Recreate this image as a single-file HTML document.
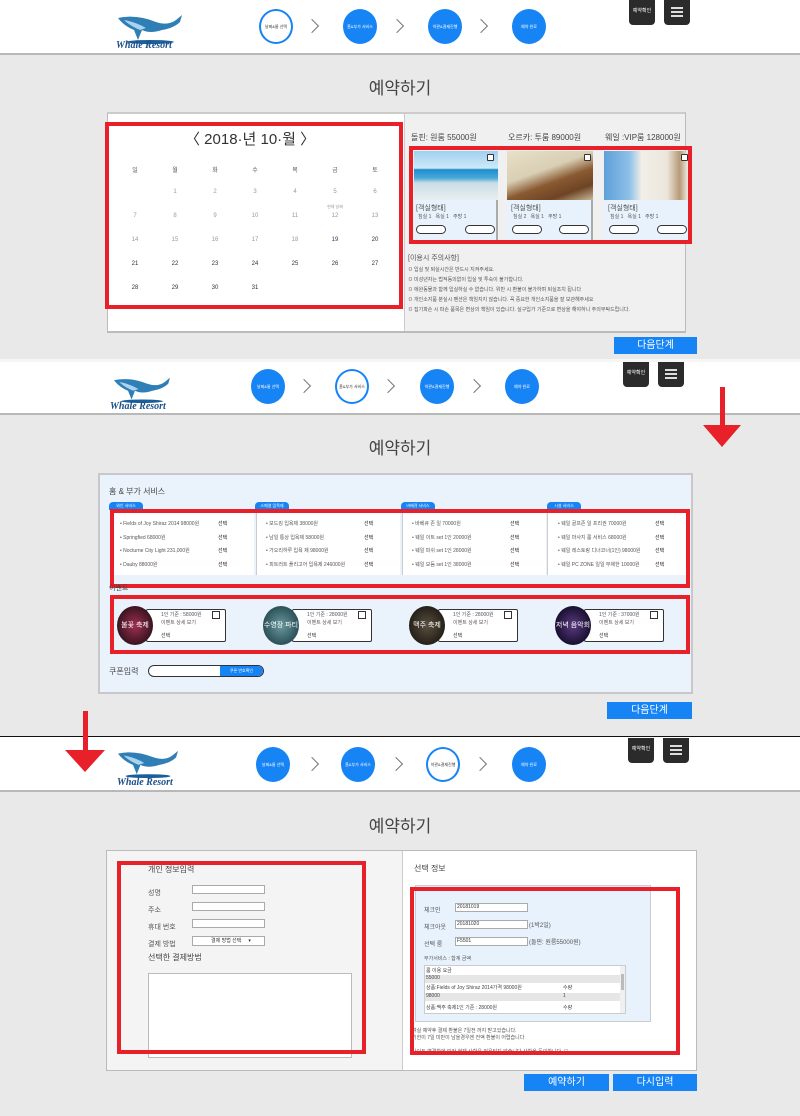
<!DOCTYPE html>
<html><head><meta charset="utf-8"><style>
*{margin:0;padding:0;box-sizing:border-box}
body{width:800px;height:1116px;position:relative;overflow:hidden;background:#e9e9e9;font-family:"Liberation Sans","Noto Sans CJK KR",sans-serif;color:#333}
div,span{position:absolute}
.hdr{left:0;width:800px;background:#fff;border-bottom:2px solid #b8b8b8}
.c{width:34px;height:35px;border-radius:50%;background:#1784f5;color:#fff;font-size:4px;display:flex;align-items:center;justify-content:center;text-align:center}
.c.w{background:#fff;border:2px solid #1784f5;color:#333}
.chev{width:10px;height:10px;border-right:1px solid #777;border-top:1px solid #777;transform:rotate(45deg)}
.db{width:26px;height:25px;background:#2b2b2b;border-radius:0 0 4px 4px;color:#fff;font-size:5px;text-align:center;line-height:22px}
.ham{width:26px;height:25px;background:#2b2b2b;border-radius:0 0 4px 4px}
.ham i{position:absolute;left:7px;width:12px;height:2px;background:#ddd}
.title{left:0;width:800px;text-align:center;font-size:17px;color:#444}
.red{border:4px solid #e8202a}
.btn{background:#1784f5;color:#fff;font-size:10px;text-align:center;line-height:18px}
.f7{font-size:7px}.f5{font-size:5px;color:#555}
.cal span{width:20px;text-align:center;font-size:6px;color:#999}
.arrow{width:0;height:0}
</style></head><body>

<!-- SECTION 1 header -->
<div class="hdr" style="top:0;height:55px"></div>
<svg style="position:absolute;left:116px;top:12px" width="68" height="32" viewBox="0 0 68 32"><path d="M2 6 Q20 2 40 10 Q52 14 60 8 L66 3 L64 10 Q58 16 46 18 Q34 22 26 18 L22 28 L18 18 Q8 14 2 6Z" fill="#2f7fb6"/><path d="M8 8 Q20 10 30 16 L24 18 Q14 14 8 8Z" fill="#a9d3ee"/><ellipse cx="34" cy="30" rx="24" ry="2" fill="#1a5f9a"/></svg>
<div style="left:116px;top:40px;font:italic bold 10px 'Liberation Serif',serif;color:#1b4f8a">Whale Resort</div>
<div class="c w" style="left:259px;top:9px">날짜&룸 선택</div>
<div class="chev" style="left:307px;top:21px"></div>
<div class="c" style="left:343px;top:9px">홈&부가 서비스</div>
<div class="chev" style="left:392px;top:21px"></div>
<div class="c" style="left:428px;top:9px">약관&결제진행</div>
<div class="chev" style="left:476px;top:21px"></div>
<div class="c" style="left:512px;top:9px">예약 완료</div>
<div class="db" style="left:629px;top:0">예약확인</div>
<div class="ham" style="left:664px;top:0"><i style="top:7px"></i><i style="top:11px"></i><i style="top:15px"></i></div>

<div class="title" style="top:74px">예약하기</div>
<div style="left:107px;top:112px;width:579px;height:221px;background:#fff;border:1px solid #bbb;border-top:2px solid #ccc;border-bottom:2px solid #bbb"></div>
<div style="left:404px;top:114px;width:281px;height:217px;background:#f0f0f0;border-left:1px solid #ccc"></div>
<div class="red" style="left:105px;top:122px;width:298px;height:187px"></div>
<div style="left:185px;top:128px;font-size:15px;color:#333">〈 2018·년 10·월 〉</div>
<div class="cal">
<span style="left:125px;top:165px;color:#555">일</span><span style="left:165px;top:165px;color:#555">월</span><span style="left:205px;top:165px;color:#555">화</span><span style="left:245px;top:165px;color:#555">수</span><span style="left:285px;top:165px;color:#555">목</span><span style="left:325px;top:165px;color:#555">금</span><span style="left:365px;top:165px;color:#555">토</span>
<span style="left:165px;top:189px">1</span><span style="left:205px;top:189px">2</span><span style="left:245px;top:189px">3</span><span style="left:285px;top:189px">4</span><span style="left:325px;top:189px">5</span><span style="left:365px;top:189px">6</span>
<span style="left:320px;top:204px;width:30px;font-size:4px">현재 날짜</span>
<span style="left:125px;top:213px">7</span><span style="left:165px;top:213px">8</span><span style="left:205px;top:213px">9</span><span style="left:245px;top:213px">10</span><span style="left:285px;top:213px">11</span><span style="left:325px;top:213px">12</span><span style="left:365px;top:213px">13</span>
<span style="left:125px;top:237px">14</span><span style="left:165px;top:237px">15</span><span style="left:205px;top:237px">16</span><span style="left:245px;top:237px">17</span><span style="left:285px;top:237px">18</span><span style="left:325px;top:237px;color:#246">19</span><span style="left:365px;top:237px;color:#333">20</span>
<span style="left:125px;top:261px;color:#333">21</span><span style="left:165px;top:261px;color:#333">22</span><span style="left:205px;top:261px;color:#333">23</span><span style="left:245px;top:261px;color:#333">24</span><span style="left:285px;top:261px;color:#333">25</span><span style="left:325px;top:261px;color:#333">26</span><span style="left:365px;top:261px;color:#333">27</span>
<span style="left:125px;top:285px;color:#333">28</span><span style="left:165px;top:285px;color:#333">29</span><span style="left:205px;top:285px;color:#333">30</span><span style="left:245px;top:285px;color:#333">31</span>
</div>
<div style="left:411px;top:132px;font-size:8px;color:#444;white-space:nowrap">돌핀: 원룸 55000원</div>
<div style="left:508px;top:132px;font-size:8px;color:#444;white-space:nowrap">오르카: 투룸 89000원</div>
<div style="left:605px;top:132px;font-size:8px;color:#444;white-space:nowrap">웨일 :VIP룸 128000원</div>

<div style="left:414px;top:151px;width:84px;height:90px;background:#e8f2fc;border-right:2px solid #aaa"></div>
<div style="left:414px;top:151px;width:84px;height:49px;background:linear-gradient(#9fd0f0 0,#cfe9f7 35%,#1e8ecf 38%,#48a9d8 55%,#c9dde6 65%,#e8eef0 100%)"></div>
<div style="left:507px;top:151px;width:86px;height:90px;background:#e8f2fc;border-right:2px solid #aaa"></div>
<div style="left:507px;top:151px;width:86px;height:49px;background:linear-gradient(160deg,#e8e0c8 0,#d8cfb4 40%,#8a5a32 60%,#6d4424 80%,#c8b89a 100%)"></div>
<div style="left:604px;top:151px;width:84px;height:90px;background:#e8f2fc"></div>
<div style="left:604px;top:151px;width:84px;height:49px;background:linear-gradient(90deg,#5f9fd8 0,#8cc0e8 30%,#f2efe8 45%,#ece6dc 75%,#b89a78 90%,#f0ece4 100%)"></div>
<div style="left:487px;top:154px;width:7px;height:7px;border:1px solid #333;background:#fff;border-radius:1px"></div>
<div style="left:584px;top:154px;width:7px;height:7px;border:1px solid #333;background:#fff;border-radius:1px"></div>
<div style="left:681px;top:154px;width:7px;height:7px;border:1px solid #333;background:#fff;border-radius:1px"></div>
<div class="f7" style="left:416px;top:203px;color:#555">[객실형태]</div><div class="f5" style="left:418px;top:213px">침실 1 &nbsp; 욕실 1 &nbsp; 주방 1</div>
<div class="f7" style="left:511px;top:203px;color:#555">[객실형태]</div><div class="f5" style="left:513px;top:213px">침실 2 &nbsp; 욕실 1 &nbsp; 주방 1</div>
<div class="f7" style="left:608px;top:203px;color:#555">[객실형태]</div><div class="f5" style="left:610px;top:213px">침실 1 &nbsp; 욕실 1 &nbsp; 주방 1</div>
<div style="left:416px;top:225px;width:30px;height:9px;border:1px solid #333;border-radius:5px;background:#fff"></div><div style="left:465px;top:225px;width:30px;height:9px;border:1px solid #333;border-radius:5px;background:#fff"></div>
<div style="left:512px;top:225px;width:30px;height:9px;border:1px solid #333;border-radius:5px;background:#fff"></div><div style="left:559px;top:225px;width:30px;height:9px;border:1px solid #333;border-radius:5px;background:#fff"></div>
<div style="left:609px;top:225px;width:30px;height:9px;border:1px solid #333;border-radius:5px;background:#fff"></div><div style="left:657px;top:225px;width:30px;height:9px;border:1px solid #333;border-radius:5px;background:#fff"></div>
<div class="red" style="left:409px;top:146px;width:283px;height:98px"></div>
<div style="left:408px;top:253px;font-size:7px;color:#555">[이용시 주의사항]</div>
<div class="f5" style="left:408px;top:265px;line-height:10px;white-space:nowrap">ㅁ 입실 및 퇴실시간은 반드시 지켜주세요.<br>ㅁ 미성년자는 법적동의없이 입실 및 투숙이 불가합니다.<br>ㅁ 애완동물과 함께 입실하실 수 없습니다. 위반 시 환불이 불가하며 퇴실조치 됩니다<br>ㅁ 개인소지품 분실시 펜션은 책임지지 않습니다. 꼭 중요한 개인소지품을 잘 보관해주세요<br>ㅁ 집기파손 시 파손 품목은 변상의 책임이 있습니다. 실구입가 기준으로 변상을 해야하니 주의부탁드립니다.</div>
<div class="btn" style="left:614px;top:337px;width:83px;height:17px">다음단계</div>

<!-- SECTION 2 -->
<div style="left:0;top:359px;width:800px;height:3px;background:#f6f6f6"></div>
<div class="hdr" style="top:362px;height:53px"></div>
<svg style="position:absolute;left:110px;top:375px" width="64" height="28" viewBox="0 0 68 32"><path d="M2 6 Q20 2 40 10 Q52 14 60 8 L66 3 L64 10 Q58 16 46 18 Q34 22 26 18 L22 28 L18 18 Q8 14 2 6Z" fill="#2f7fb6"/><path d="M8 8 Q20 10 30 16 L24 18 Q14 14 8 8Z" fill="#a9d3ee"/><ellipse cx="34" cy="30" rx="24" ry="2" fill="#1a5f9a"/></svg>
<div style="left:110px;top:401px;font:italic bold 10px 'Liberation Serif',serif;color:#1b4f8a">Whale Resort</div>
<div class="c" style="left:251px;top:369px">날짜&룸 선택</div>
<div class="chev" style="left:299px;top:381px"></div>
<div class="c w" style="left:335px;top:369px">홈&부가 서비스</div>
<div class="chev" style="left:383px;top:381px"></div>
<div class="c" style="left:420px;top:369px">약관&결제진행</div>
<div class="chev" style="left:469px;top:381px"></div>
<div class="c" style="left:505px;top:369px">예약 완료</div>
<div class="db" style="left:623px;top:362px">예약확인</div>
<div class="ham" style="left:658px;top:362px"><i style="top:7px"></i><i style="top:11px"></i><i style="top:15px"></i></div>
<div style="left:720px;top:387px;width:5px;height:40px;background:#e8202a"></div>
<div class="arrow" style="left:703px;top:425px;border-left:19px solid transparent;border-right:19px solid transparent;border-top:22px solid #e8202a"></div>
<div class="title" style="top:434px">예약하기</div>

<div style="left:98px;top:473px;width:595px;height:221px;background:#eaf3fc;border:2px solid #c8c8c8"></div>
<div style="left:109px;top:486px;font-size:8px;color:#444">홈 &amp; 부가 서비스</div>
<div style="left:109px;top:502px;width:34px;height:8px;background:#1784f5;border-radius:4px 4px 0 0;font-size:4px;color:#fff;text-align:center;line-height:8px">와인 서비스</div>
<div style="left:255px;top:502px;width:34px;height:8px;background:#1784f5;border-radius:4px 4px 0 0;font-size:4px;color:#fff;text-align:center;line-height:8px">스페셜 입욕제</div>
<div style="left:401px;top:502px;width:34px;height:8px;background:#1784f5;border-radius:4px 4px 0 0;font-size:4px;color:#fff;text-align:center;line-height:8px">바베큐 서비스</div>
<div style="left:547px;top:502px;width:34px;height:8px;background:#1784f5;border-radius:4px 4px 0 0;font-size:4px;color:#fff;text-align:center;line-height:8px">시설 서비스</div>
<div style="left:110px;top:511px;width:144px;height:64px;background:#fff"></div>
<div style="left:256px;top:511px;width:144px;height:64px;background:#fff;border-left:1px solid #ccc"></div>
<div style="left:402px;top:511px;width:144px;height:64px;background:#fff;border-left:1px solid #ccc"></div>
<div style="left:547px;top:511px;width:141px;height:64px;background:#fff;border-left:1px solid #ccc"></div>
<div class="f5" style="left:120px;top:518px;line-height:13.5px;white-space:nowrap">• Fields of Joy Shiraz 2014 98000원<br>• Springfied 68000원<br>• Nocturne City Light 231,000원<br>• Dauby 88000원</div>
<div class="f5" style="left:266px;top:518px;line-height:13.5px;white-space:nowrap">• 보드킹 입욕제 38000원<br>• 남일 통상 입욕제 58000원<br>• 가오리하루 입욕 제 98000원<br>• 피트러트 플리고어 입욕제 246000원</div>
<div class="f5" style="left:412px;top:518px;line-height:13.5px;white-space:nowrap">• 바베큐 존 일 70000원<br>• 웨일 이트 set 1인 20000원<br>• 웨일 피쉬 set 1인 28000원<br>• 웨일 모듬 set 1인 38000원</div>
<div class="f5" style="left:558px;top:518px;line-height:13.5px;white-space:nowrap">• 웨일 골프존 일 프리권 70000원<br>• 웨일 마사지 룸 서비스 68000원<br>• 웨일 레스토랑 디너코너(1인) 98000원<br>• 웨일 PC ZONE 일일 무제한 10000원</div>
<div style="left:218px;top:518px;font-size:5px;line-height:13.5px;color:#222">선택<br>선택<br>선택<br>선택</div>
<div style="left:364px;top:518px;font-size:5px;line-height:13.5px;color:#222">선택<br>선택<br>선택<br>선택</div>
<div style="left:510px;top:518px;font-size:5px;line-height:13.5px;color:#222">선택<br>선택<br>선택<br>선택</div>
<div style="left:655px;top:518px;font-size:5px;line-height:13.5px;color:#222">선택<br>선택<br>선택<br>선택</div>
<div class="red" style="left:110px;top:509px;width:580px;height:79px"></div>
<div style="left:109px;top:583px;font-size:7px;color:#444">이벤트</div>

<div style="left:146px;top:609px;width:80px;height:33px;background:#fff;border:1px solid #333;border-radius:2px"></div>
<div style="left:292px;top:609px;width:80px;height:33px;background:#fff;border:1px solid #333;border-radius:2px"></div>
<div style="left:438px;top:609px;width:80px;height:33px;background:#fff;border:1px solid #333;border-radius:2px"></div>
<div style="left:584px;top:609px;width:80px;height:33px;background:#fff;border:1px solid #333;border-radius:2px"></div>
<div style="left:117px;top:606px;width:36px;height:39px;border-radius:50%;background:radial-gradient(#a03050,#3a1420 70%);color:#fff;font-size:7px;text-align:center;line-height:39px">불꽃 축제</div>
<div style="left:263px;top:606px;width:36px;height:39px;border-radius:50%;background:radial-gradient(#6a9aa0,#2c5058 70%);color:#fff;font-size:7px;text-align:center;line-height:39px">수영장 파티</div>
<div style="left:409px;top:606px;width:36px;height:39px;border-radius:50%;background:radial-gradient(#5a5040,#252018 70%);color:#fff;font-size:7px;text-align:center;line-height:39px">맥주 축제</div>
<div style="left:555px;top:606px;width:36px;height:39px;border-radius:50%;background:radial-gradient(#5a3a80,#1a1030 70%);color:#fff;font-size:7px;text-align:center;line-height:39px">저녁 음악회</div>
<div class="f5" style="left:161px;top:611px;line-height:8px">1인 기준 : 58000원<br>이벤트 상세 보기</div><div style="left:161px;top:632px;font-size:5px">선택</div>
<div class="f5" style="left:307px;top:611px;line-height:8px">1인 기준 : 28000원<br>이벤트 상세 보기</div><div style="left:307px;top:632px;font-size:5px">선택</div>
<div class="f5" style="left:453px;top:611px;line-height:8px">1인 기준 : 28000원<br>이벤트 상세 보기</div><div style="left:453px;top:632px;font-size:5px">선택</div>
<div class="f5" style="left:599px;top:611px;line-height:8px">1인 기준 : 37000원<br>이벤트 상세 보기</div><div style="left:599px;top:632px;font-size:5px">선택</div>
<div style="left:212px;top:611px;width:8px;height:8px;border:1px solid #333"></div>
<div style="left:358px;top:611px;width:8px;height:8px;border:1px solid #333"></div>
<div style="left:504px;top:611px;width:8px;height:8px;border:1px solid #333"></div>
<div style="left:650px;top:611px;width:8px;height:8px;border:1px solid #333"></div>
<div class="red" style="left:110px;top:595px;width:580px;height:59px"></div>
<div style="left:109px;top:666px;font-size:8px;color:#444">쿠폰입력</div>
<div style="left:148px;top:665px;width:116px;height:12px;border:1px solid #333;border-radius:6px;background:#fff;overflow:hidden"><span style="right:0;top:0;width:43px;height:10px;background:#1784f5;color:#fff;font-size:4px;text-align:center;line-height:10px">쿠폰 번호확인</span></div>
<div class="btn" style="left:607px;top:702px;width:85px;height:17px">다음단계</div>

<!-- SECTION 3 -->
<div style="left:0;top:736px;width:800px;height:1px;background:#111"></div>
<div class="hdr" style="top:737px;height:55px"></div>
<svg style="position:absolute;left:116px;top:748px" width="64" height="30" viewBox="0 0 68 32"><path d="M2 6 Q20 2 40 10 Q52 14 60 8 L66 3 L64 10 Q58 16 46 18 Q34 22 26 18 L22 28 L18 18 Q8 14 2 6Z" fill="#2f7fb6"/><path d="M8 8 Q20 10 30 16 L24 18 Q14 14 8 8Z" fill="#a9d3ee"/><ellipse cx="34" cy="30" rx="24" ry="2" fill="#1a5f9a"/></svg>
<div style="left:117px;top:777px;font:italic bold 10px 'Liberation Serif',serif;color:#1b4f8a">Whale Resort</div>
<div class="c" style="left:256px;top:747px">날짜&룸 선택</div>
<div class="chev" style="left:307px;top:759px"></div>
<div class="c" style="left:341px;top:747px">홈&부가 서비스</div>
<div class="chev" style="left:391px;top:759px"></div>
<div class="c w" style="left:426px;top:747px">약관&결제진행</div>
<div class="chev" style="left:475px;top:759px"></div>
<div class="c" style="left:512px;top:747px">예약 완료</div>
<div class="db" style="left:628px;top:738px">예약확인</div>
<div class="ham" style="left:663px;top:738px"><i style="top:7px"></i><i style="top:11px"></i><i style="top:15px"></i></div>
<div style="left:83px;top:711px;width:5px;height:42px;background:#e8202a"></div>
<div class="arrow" style="left:65px;top:750px;border-left:20px solid transparent;border-right:20px solid transparent;border-top:22px solid #e8202a"></div>
<div class="title" style="top:812px">예약하기</div>

<div style="left:106px;top:850px;width:591px;height:221px;background:#fff;border:1px solid #bbb"></div>
<div style="left:107px;top:851px;width:296px;height:219px;background:#f4f4f4;border-right:1px solid #ccc"></div>
<div style="left:148px;top:864px;font-size:8px;color:#444">개인 정보입력</div>
<div style="left:148px;top:885px;font-size:7px;color:#555;line-height:17px">성명<br>주소<br>휴대 번호<br>결제 방법</div>
<div style="left:192px;top:885px;width:73px;height:9px;border:1px solid #aaa;background:#fff"></div>
<div style="left:192px;top:902px;width:73px;height:9px;border:1px solid #aaa;background:#fff"></div>
<div style="left:192px;top:919px;width:73px;height:9px;border:1px solid #aaa;background:#fff"></div>
<div style="left:192px;top:936px;width:73px;height:10px;border:1px solid #aaa;background:#fff;font-size:5px;line-height:8px;padding-left:18px">결제 방법 선택 &nbsp;&nbsp;&nbsp; ▾</div>
<div style="left:148px;top:952px;font-size:8px;color:#444">선택한 결제방법</div>
<div style="left:148px;top:973px;width:204px;height:85px;background:#fff;border:1px solid #bbb"></div>
<div class="red" style="left:117px;top:861px;width:249px;height:193px"></div>

<div style="left:414px;top:863px;font-size:8px;color:#444">선택 정보</div>
<div style="left:415px;top:885px;width:236px;height:137px;background:#e8f2fc;border:1px solid #ccc"></div>
<div style="left:424px;top:903px;font-size:6px;color:#555;line-height:17px">체크인<br>체크아웃<br>선택 룸</div>
<div style="left:455px;top:903px;width:73px;height:9px;border:1px solid #aaa;background:#fff;font-size:5px;line-height:7px;padding-left:1px">20181019</div>
<div style="left:455px;top:920px;width:73px;height:9px;border:1px solid #aaa;background:#fff;font-size:5px;line-height:7px;padding-left:1px">20181020</div>
<div style="left:455px;top:937px;width:73px;height:9px;border:1px solid #aaa;background:#fff;font-size:5px;line-height:7px;padding-left:1px">F5501</div>
<div style="left:529px;top:920px;font-size:6px;color:#555">(1박2일)</div>
<div style="left:529px;top:937px;font-size:6px;color:#555">(돌핀: 원룸55000원)</div>
<div style="left:424px;top:955px;font-size:5px;color:#555">부가서비스 : 합계 금액</div>
<div style="left:424px;top:965px;width:202px;height:49px;background:#fff;border:1px solid #ccc;font-size:5px;color:#444">
<span style="left:1px;top:1px">룸 이용 요금</span>
<span style="left:0;top:9px;width:195px;height:8px;background:#e6e6e6;padding-left:1px">55000</span>
<span style="left:1px;top:18px">상품:Fields of Joy Shiraz 2014가격 98000원</span><span style="left:138px;top:18px">수량</span>
<span style="left:0;top:27px;width:195px;height:8px;background:#e6e6e6;padding-left:1px">98000</span><span style="left:138px;top:27px">1</span>
<span style="left:1px;top:38px">상품:맥주 축제1인 기준 : 28000원</span><span style="left:138px;top:38px">수량</span>
<span style="right:0;top:0;width:5px;height:47px;background:#f0f0f0"></span><span style="right:1px;top:8px;width:3px;height:16px;background:#bbb"></span>
</div>
<div style="left:412px;top:1028px;font-size:5px;color:#555;line-height:7px;white-space:nowrap">객실 예약후 결제 환불은 7일전 까지 받고있습니다.<br>기한이 7일 미만이 남을경우엔 전액 환불이 어렵습니다<br><br>사이트 변경함에 따라 현재 사항은 적용되지 않습니다 사항을 동의합니다. ☐</div>
<div class="red" style="left:410px;top:887px;width:270px;height:168px"></div>

<div class="btn" style="left:524px;top:1074px;width:85px;height:17px">예약하기</div>
<div class="btn" style="left:613px;top:1074px;width:84px;height:17px">다시입력</div>
</body></html>
